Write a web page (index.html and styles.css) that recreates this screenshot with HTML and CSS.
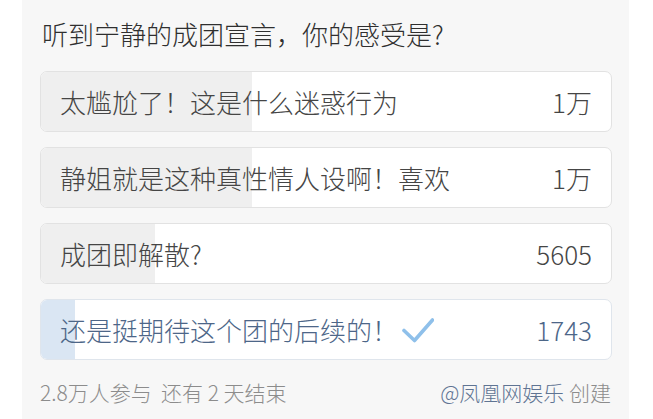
FILE: index.html
```html
<!DOCTYPE html>
<html lang="zh-CN">
<head>
<meta charset="utf-8">
<link rel="stylesheet" href="styles.css">
</head>
<body>
<div class="card">
  <div class="title">听到宁静的成团宣言，你的感受是?</div>
  <div class="options">
    <div class="opt">
      <div class="fill" style="width:37%"></div>
      <span class="label">太尴尬了！这是什么迷惑行为</span>
      <span class="count">1万</span>
    </div>
    <div class="opt">
      <div class="fill" style="width:37%"></div>
      <span class="label">静姐就是这种真性情人设啊！喜欢</span>
      <span class="count">1万</span>
    </div>
    <div class="opt">
      <div class="fill" style="width:20%"></div>
      <span class="label">成团即解散?</span>
      <span class="count">5605</span>
    </div>
    <div class="opt chosen">
      <div class="fill" style="width:6%"></div>
      <span class="label">还是挺期待这个团的后续的！<svg class="check" width="32" height="26" viewBox="0 0 32 26"><path d="M2 13.5 L12.5 23.5 L30.5 3" fill="none" stroke="#8fc0ea" stroke-width="3.6" stroke-linecap="round" stroke-linejoin="round"/></svg></span>
      <span class="count">1743</span>
    </div>
  </div>
  <div class="footer">
    <span class="meta">2.8万人参与&nbsp;&nbsp;还有 2 天结束</span>
    <span class="creator"><span class="author">@凤凰网娱乐</span> 创建</span>
  </div>
</div>
</body>
</html>
```
FILE: styles.css
```css
html, body {
  margin: 0;
  padding: 0;
  background: #ffffff;
}
body {
  font-family: "Noto Sans CJK SC", "Noto Sans", sans-serif;
  font-weight: 300;
  width: 653px;
  height: 419px;
  overflow: hidden;
}
.card {
  margin-left: 22px;
  width: 607px;
  height: 419px;
  box-sizing: border-box;
  background: #f7f7f7;
  padding: 17px 17px 0 18px;
}
.title {
  font-size: 26px;
  line-height: 34px;
  color: #2f2f2f;
  padding-left: 2px;
}
.options {
  margin-top: 20px;
  display: flex;
  flex-direction: column;
  gap: 15px;
}
.opt {
  position: relative;
  height: 61px;
  box-sizing: border-box;
  border: 1px solid #e2e2e2;
  border-radius: 7px;
  background: #ffffff;
  overflow: hidden;
  display: flex;
  align-items: center;
  justify-content: space-between;
  padding: 0 19px 0 19px;
  font-size: 26px;
  color: #454545;
}
.fill {
  position: absolute;
  left: 0;
  top: 0;
  bottom: 0;
  background: #efefef;
}
.label, .count {
  position: relative;
  display: flex;
  align-items: center;
}
.opt.chosen {
  border-color: #dfe5ec;
  color: #4d6688;
}
.opt.chosen .fill {
  background: #dae6f3;
}
.check {
  margin-left: 4px;
}
.footer {
  margin-top: 20px;
  display: flex;
  justify-content: space-between;
  font-size: 21px;
  line-height: 24px;
  color: #8c8c8c;
  padding-right: 1px;
}
.author {
  color: #5f7493;
}
```
